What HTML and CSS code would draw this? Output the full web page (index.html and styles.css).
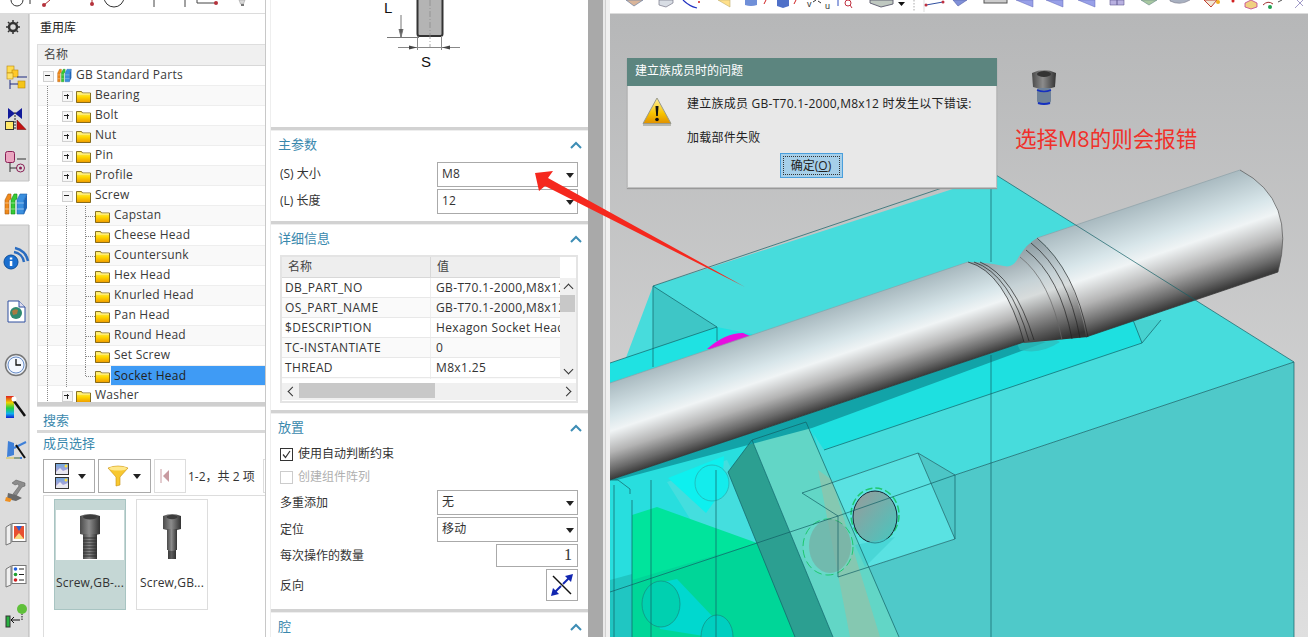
FILE: index.html
```html
<!DOCTYPE html>
<html lang="zh">
<head>
<meta charset="utf-8">
<title>重用库</title>
<link rel="stylesheet" href="styles.css">
</head>
<body>
<svg class="defs" width="0" height="0">
  <defs>
    <linearGradient id="fg" x1="0" y1="0" x2="0" y2="1"><stop offset="0" stop-color="#fff27a"/><stop offset=".5" stop-color="#ffd800"/><stop offset="1" stop-color="#ee9a00"/></linearGradient>
    <linearGradient id="bolt" x1="0" y1="0" x2="1" y2="0"><stop offset="0" stop-color="#4a4a4a"/><stop offset=".45" stop-color="#8c8c8c"/><stop offset="1" stop-color="#333"/></linearGradient>
    <symbol id="folder" viewBox="0 0 15 15"><path d="M.5 3.500h5l1 1.500h8v9.500H.5z" fill="url(#fg)" stroke="#6b5200" stroke-width=".8"/><path d="M1 6h13" stroke="#fff6a8"/></symbol>
    <symbol id="chev" viewBox="0 0 12 8"><path d="M1 7l5-5 5 5" fill="none" stroke="#3d8db5" stroke-width="2"/></symbol>
    <symbol id="books" viewBox="0 0 24 22"><path d="M1 7l3-6h3v5l-2 1v14H1z" fill="#f08a1c" stroke="#a85a10" stroke-width=".6"/><path d="M7 7l3-6h3v5l-2 1v14H7z" fill="#35c935" stroke="#158a15" stroke-width=".6"/><path d="M13 7l3-6h7l-3 6v14h-7z" fill="#3a8fdf" stroke="#1d5ea8" stroke-width=".6"/><path d="M20 7l3-6v14l-3 6z" fill="#1f66b8"/><path d="M1 10h4M1 16h4M7 10h4M7 16h4M13 10h7M13 16h7" stroke="#fff" stroke-opacity=".45"/></symbol>
    <symbol id="screw1" viewBox="0 0 30 50"><path d="M5 3q10-4 20 0v18q-10 3-20 0z" fill="url(#bolt)"/><ellipse cx="15" cy="4" rx="7" ry="2.500" fill="#3c3c3c"/><rect x="8" y="21" width="14" height="25" fill="url(#bolt)"/><path d="M8 25h14M8 28h14M8 31h14M8 34h14M8 37h14M8 40h14M8 43h14" stroke="#2e2e2e"/></symbol>
    <symbol id="screw2" viewBox="0 0 24 50"><path d="M3 3q9-4 18 0v13q-9 3-18 0z" fill="url(#bolt)"/><ellipse cx="12" cy="4" rx="5.500" ry="2.200" fill="#3c3c3c"/><rect x="7" y="16" width="10" height="21" fill="url(#bolt)"/><rect x="8" y="37" width="8" height="9" fill="url(#bolt)"/><path d="M8 39h8M8 41h8M8 43h8M8 45h8" stroke="#2e2e2e"/></symbol>
  </defs>
</svg>

<div class="app">
  <div class="left">
    <svg class="toolstrip-svg" width="265" height="13" viewBox="0 0 265 13">
      <path d="M11 0a6 6 0 0 0 12 0M30 0v4" fill="none" stroke="#333" stroke-width="1"/>
      <path d="M44 5l6-5M92 4V0" stroke="#a33" fill="none"/><circle cx="44" cy="5" r="2" fill="#b5323c"/><circle cx="92" cy="4" r="2" fill="#b5323c"/>
      <circle cx="114" cy="-3" r="10" fill="none" stroke="#333"/>
      <path d="M154 0v7M185 0v7M197 0v3h19" stroke="#444" fill="none"/><circle cx="216" cy="3" r="2" fill="#b5323c"/>
      <path d="M239 0h6l-1.500 4h-3z" fill="#d8d8d8" stroke="#999" stroke-width=".5"/><rect x="241" y="4" width="3" height="2" fill="#777"/>
    </svg>
    <div class="left-body">
      <svg class="rail" width="30" height="623" viewBox="0 14 30 623">
        <rect x="0" y="13" width="29" height="624" fill="#dcdcdc"/>
        <path d="M29 13v168M29 225v412" stroke="#b5b5b5"/>
        <rect x="0" y="181" width="30" height="44" fill="#fff"/>
        <path d="M0 181h29M0 225h29" stroke="#c4c4c4"/>
        <g fill="none" stroke="#333"><circle cx="13" cy="27" r="4" stroke-width="2.500"/><path d="M13 20v2M13 32v2M6 27h2M18 27h2M8 22l1.500 1.500M16.500 30.500L18 32M18 22l-1.500 1.500M9.500 30.500L8 32" stroke-width="1.500"/></g>
        <g stroke="#b8860b" stroke-width=".6"><rect x="7" y="66" width="7" height="7" fill="#ffdc50"/><rect x="12" y="70" width="6" height="7" fill="#ffc928"/><rect x="7" y="73" width="6" height="6" fill="#ffe36a"/><rect x="18" y="81" width="7" height="7" fill="#f5c518"/></g>
        <path d="M17 77h10M10 80v9M10 84h8" stroke="#1f2a80" fill="none"/>
        <path d="M8 108l7 5.500 7-5.500v11l-7-5.500-7 5.500z" fill="#111a9a"/><rect x="5.500" y="121.500" width="8" height="8" fill="#ffe868" stroke="#333"/><path d="M17 120l9 9.500h-9z" fill="#c41212" stroke="#600" stroke-width=".5"/><path d="M15 112v18" stroke="#222" stroke-dasharray="2 1"/>
        <rect x="5.500" y="151.500" width="9" height="11" rx="2" fill="#eaa5c0" stroke="#8a1f55"/><path d="M17 159h9M10 163v9M10 168h7" stroke="#333" fill="none"/><circle cx="20.500" cy="168" r="4" fill="none" stroke="#8a1f55"/><circle cx="20.500" cy="168" r="1.500" fill="#8a1f55"/>
        <use href="#books" x="4" y="193" width="24" height="22"/>
        <circle cx="11" cy="262" r="7" fill="#1a6fd0" stroke="#0c4f9c"/><rect x="9.800" y="261" width="2.500" height="5" fill="#fff"/><rect x="9.800" y="257.500" width="2.500" height="2" fill="#fff"/>
        <path d="M14 252a12 12 0 0 1 10 10M15 248a16 16 0 0 1 13 13" fill="none" stroke="#2a6cc0" stroke-width="2.500"/>
        <path d="M8 301h11l6 6v15H8z" fill="#fff" stroke="#2f4f9f"/><path d="M19 301v6h6" fill="#dde" stroke="#2f4f9f"/><circle cx="16" cy="313" r="6" fill="#2f8a70"/><path d="M12 311q3-3 6-1l-1 4-4 1z" fill="#a87a40"/>
        <circle cx="16" cy="365" r="10.500" fill="#e8eef8" stroke="#777" stroke-width="1.500"/><circle cx="16" cy="365" r="8" fill="#f4f8ff" stroke="#6a8fc8"/><path d="M16 359v6h5" fill="none" stroke="#111" stroke-width="1.300"/>
        <defs><linearGradient id="rb" x1="0" y1="0" x2="0" y2="1"><stop offset="0" stop-color="#e02020"/><stop offset=".3" stop-color="#f0d000"/><stop offset=".55" stop-color="#20d040"/><stop offset=".8" stop-color="#10b0f0"/><stop offset="1" stop-color="#1020d0"/></linearGradient></defs>
        <rect x="6" y="396" width="8" height="22" fill="url(#rb)"/><path d="M14 401l11 15" stroke="#111" stroke-width="2.500"/><circle cx="14" cy="399" r="2.500" fill="#fff"/>
        <path d="M8 441l6 2v12l-7 2z" fill="#3f80d8"/><path d="M14 448l12-6M14 458h8" stroke="#3f80d8" stroke-width="2"/><path d="M16 445l9 13" stroke="#111" stroke-width="2"/><path d="M6 458h14" stroke="#d8c040"/>
        <path d="M25 483l-9-3-4 3 3 2 3-1 1 2-6 8 3 2 6-9 3-1z" fill="#8c8c8c" stroke="#555" stroke-width=".5"/><path d="M8 493l8 2 6 3-6 3-9-2z" fill="#6a6a6a"/><path d="M6 497l6 2-2 3-5-1z" fill="#f09020"/>
        <path d="M6 527l5-3v19l-5 2z" fill="#f0f0f0" stroke="#777"/><rect x="12" y="523.500" width="14" height="18" fill="#fff" stroke="#777"/><rect x="14" y="526" width="10" height="13" fill="#e85030"/><path d="M16 526l3 5 3-5z" fill="#3060d0"/><path d="M14 539h10l-5-6z" fill="#f8d880"/>
        <path d="M6 569l5-3v19l-5 2z" fill="#f0f0f0" stroke="#777"/><rect x="12" y="565.500" width="14" height="18" fill="#fff" stroke="#777"/><circle cx="15.500" cy="569" r="1.800" fill="#2060e0"/><circle cx="15.500" cy="574.500" r="1.800" fill="#20a030"/><circle cx="15.500" cy="580" r="1.800" fill="#d02020"/><path d="M19 569h5M19 574.500h5M19 580h5" stroke="#222"/>
        <rect x="6" y="616" width="4" height="11" fill="#28b040" stroke="#333"/><path d="M20 620h-8M14 617l-3 3 3 3" fill="none" stroke="#111"/><path d="M22 620v-6" stroke="#111" stroke-dasharray="1.500 1"/><circle cx="22" cy="609" r="5" fill="#5fc03a"/>
      </svg>
      <div class="lib">
        <div class="lib-title">重用库</div>
        <div class="tree">
          <div class="tree-head">名称</div>
          <div class="tree-body">
            <div class="row"><span class="g exp minus"></span><svg class="ic" width="16" height="15"><use href="#books"/></svg><span class="t">GB Standard Parts</span></div>
            <div class="row"><span class="g line"></span><span class="g exp plus"></span><svg class="ic"><use href="#folder"/></svg><span class="t">Bearing</span></div>
            <div class="row"><span class="g line"></span><span class="g exp plus"></span><svg class="ic"><use href="#folder"/></svg><span class="t">Bolt</span></div>
            <div class="row"><span class="g line"></span><span class="g exp plus"></span><svg class="ic"><use href="#folder"/></svg><span class="t">Nut</span></div>
            <div class="row"><span class="g line"></span><span class="g exp plus"></span><svg class="ic"><use href="#folder"/></svg><span class="t">Pin</span></div>
            <div class="row"><span class="g line"></span><span class="g exp plus"></span><svg class="ic"><use href="#folder"/></svg><span class="t">Profile</span></div>
            <div class="row"><span class="g line"></span><span class="g exp minus"></span><svg class="ic"><use href="#folder"/></svg><span class="t">Screw</span></div>
            <div class="row"><span class="g line"></span><span class="g line"></span><span class="g conn"></span><svg class="ic"><use href="#folder"/></svg><span class="t">Capstan</span></div>
            <div class="row"><span class="g line"></span><span class="g line"></span><span class="g conn"></span><svg class="ic"><use href="#folder"/></svg><span class="t">Cheese Head</span></div>
            <div class="row"><span class="g line"></span><span class="g line"></span><span class="g conn"></span><svg class="ic"><use href="#folder"/></svg><span class="t">Countersunk</span></div>
            <div class="row"><span class="g line"></span><span class="g line"></span><span class="g conn"></span><svg class="ic"><use href="#folder"/></svg><span class="t">Hex Head</span></div>
            <div class="row"><span class="g line"></span><span class="g line"></span><span class="g conn"></span><svg class="ic"><use href="#folder"/></svg><span class="t">Knurled Head</span></div>
            <div class="row"><span class="g line"></span><span class="g line"></span><span class="g conn"></span><svg class="ic"><use href="#folder"/></svg><span class="t">Pan Head</span></div>
            <div class="row"><span class="g line"></span><span class="g line"></span><span class="g conn"></span><svg class="ic"><use href="#folder"/></svg><span class="t">Round Head</span></div>
            <div class="row"><span class="g line"></span><span class="g line"></span><span class="g conn"></span><svg class="ic"><use href="#folder"/></svg><span class="t">Set Screw</span></div>
            <div class="row"><span class="g line"></span><span class="g line"></span><span class="g conn last"></span><svg class="ic"><use href="#folder"/></svg><span class="t cur">Socket Head</span></div>
            <div class="row"><span class="g line"></span><span class="g exp plus"></span><svg class="ic"><use href="#folder"/></svg><span class="t">Washer</span></div>
          </div>
        </div>
        <div class="band"></div>
        <div class="lib-sec search">搜索</div>
        <div class="band thin"></div>
        <div class="lib-sec member">成员选择</div>
        <div class="gal-tools">
          <button class="tbtn">
            <svg width="14" height="26" viewBox="0 0 14 26"><defs><linearGradient id="pic" x1="0" y1="0" x2="0" y2="1"><stop offset="0" stop-color="#6fa8dc"/><stop offset="1" stop-color="#c8a0d8"/></linearGradient></defs><rect x=".5" y=".5" width="13" height="11" fill="url(#pic)" stroke="#333"/><path d="M1 9l4-4 3 3 5-2v5H1z" fill="#e8e8f0"/><rect x=".5" y="14.500" width="13" height="11" fill="url(#pic)" stroke="#333"/><path d="M1 23l4-4 3 3 5-2v5H1z" fill="#e8e8f0"/><circle cx="11" cy="3" r="1.500" fill="#ffe040"/><circle cx="11" cy="17" r="1.500" fill="#ffe040"/></svg>
            <span class="caret"></span>
          </button>
          <button class="tbtn">
            <svg width="22" height="22" viewBox="0 0 22 22"><path d="M1 3q10-4 20 0l-8 9v8l-4 1v-9z" fill="#f8c830" stroke="#c89010" stroke-width=".6"/><ellipse cx="11" cy="3.500" rx="9" ry="2" fill="#ffe88a"/></svg>
            <span class="caret"></span>
          </button>
          <div class="pager"><svg width="10" height="16" viewBox="0 0 10 16"><path d="M1 1v14" stroke="#c89aa0"/><path d="M9 2v12L3 8z" fill="#c89aa0"/></svg></div>
          <span class="count">1-2，共 2 项</span>
          <div class="pager stub"></div>
        </div>
        <div class="gallery">
          <div class="item on">
            <div class="thumb"><svg width="30" height="50"><use href="#screw1"/></svg></div>
            <div class="cap">Screw,GB-...</div>
          </div>
          <div class="item">
            <div class="thumb"><svg width="24" height="50"><use href="#screw2"/></svg></div>
            <div class="cap">Screw,GB...</div>
          </div>
        </div>
      </div>
    </div>
  </div>

  <div class="gutter"></div>

  <div class="form">
    <div class="preview">
      <svg width="316" height="72" viewBox="0 0 316 72">
        <rect x="146.500" y="-4" width="25" height="40" rx="2" fill="#b4b4b4" stroke="#333" stroke-width="2"/>
        <path d="M159 0v48" stroke="#888" stroke-dasharray="6 2 1 2" stroke-width=".7"/>
        <path d="M116 37.500h32M130 15v22M128 29l2 8 2-8" stroke="#777" fill="#444"/>
        <path d="M127 47.500h62M146.500 36v14M170.500 36v14" stroke="#888" fill="none"/>
        <path d="M146 47.500l-8-2v4zM171 47.500l8-2v4z" fill="#444"/>
        <text x="113" y="13" class="dim">L</text>
        <text x="150" y="67" class="dim">S</text>
      </svg>
    </div>

    <section class="sec main">
      <div class="sec-h"><span>主参数</span><svg width="12" height="8"><use href="#chev"/></svg></div>
      <div class="frow"><label>(S) 大小</label><div class="sel">M8</div></div>
      <div class="frow"><label>(L) 长度</label><div class="sel">12</div></div>
    </section>

    <section class="sec detail">
      <div class="sec-h"><span>详细信息</span><svg width="12" height="8"><use href="#chev"/></svg></div>
      <div class="grid">
        <div class="grid-main">
          <div class="grid-cols">
            <div class="ghead"><span class="c1">名称</span><span class="c2">值</span></div>
            <div class="grow"><span class="c1">DB_PART_NO</span><span class="c2">GB-T70.1-2000,M8x12</span></div>
            <div class="grow"><span class="c1">OS_PART_NAME</span><span class="c2">GB-T70.1-2000,M8x12</span></div>
            <div class="grow"><span class="c1">$DESCRIPTION</span><span class="c2">Hexagon Socket Head</span></div>
            <div class="grow"><span class="c1">TC-INSTANTIATE</span><span class="c2">0</span></div>
            <div class="grow"><span class="c1">THREAD</span><span class="c2">M8x1.25</span></div>
            <div class="grow stub"><span class="c1"></span><span class="c2"></span></div>
          </div>
          <div class="vbar"><i class="ar up"></i><b></b><i class="ar down"></i></div>
        </div>
        <div class="hbar"><i class="ar lf"></i><b></b><i class="ar rt"></i></div>
      </div>
    </section>

    <section class="sec place">
      <div class="sec-h"><span>放置</span><svg width="12" height="8"><use href="#chev"/></svg></div>
      <div class="chk"><span class="box"><svg width="11" height="11" viewBox="0 0 11 11"><path d="M2 5.500l2.500 3L9 2" fill="none" stroke="#333" stroke-width="1.200"/></svg></span>使用自动判断约束</div>
      <div class="chk off"><span class="box"></span>创建组件阵列</div>
      <div class="frow"><label>多重添加</label><div class="sel">无</div></div>
      <div class="frow"><label>定位</label><div class="sel">移动</div></div>
      <div class="frow num"><label>每次操作的数量</label><div class="inp">1</div></div>
      <div class="frow rev"><label>反向</label><div class="revb"><svg width="24" height="24" viewBox="0 0 24 24"><path d="M3 3l18 18" stroke="#111" stroke-width="1.500"/><path d="M13 11l6-6" stroke="#1226b0" stroke-width="2"/><path d="M23 1l-2 8-6-6z" fill="#1226b0"/><path d="M11 13l-6 6" stroke="#1226b0" stroke-width="2"/><path d="M1 23l2-8 6 6z" fill="#1226b0"/></svg></div></div>
    </section>

    <section class="sec cav">
      <div class="sec-h"><span>腔</span><svg width="12" height="8"><use href="#chev"/></svg></div>
    </section>
  </div>

  <div class="vscroll"></div>

  <div class="right">
    <svg class="toolstrip-svg" width="698" height="13" viewBox="610 0 698 13">
      <path d="M626 0l8 6 9-6z" fill="#d9b59a" stroke="#6a7fa0" stroke-width=".7"/>
      <path d="M659 0v5l7 2 7-4V0z" fill="#d8dde4" stroke="#778" stroke-width=".7"/>
      <path d="M683 0q6 6 14 8" fill="none" stroke="#2030c0" stroke-width="1.200"/><circle cx="699" cy="2" r="1" fill="#d02020"/>
      <path d="M718 0l12 7V0z" fill="#ffe08a" stroke="#c0b070" stroke-width=".6"/>
      <path d="M745 0v5q6 2 12 0V0z" fill="#6f8fd8"/><path d="M764 4l2-4" stroke="#d02020"/>
      <path d="M777 0v6l6 2 6-2V0z" fill="#4f70c8"/><path d="M794 4l2-4" stroke="#d02020"/>
      <text x="807" y="7" class="tiny">v</text><text x="825" y="9" class="tiny">u</text><path d="M813 2l3-2M818 1l3 2" stroke="#333"/>
      <path d="M838 0v6" stroke="#3050c0"/><circle cx="848" cy="3" r="3" fill="none" stroke="#c03040"/><path d="M850 5l2 3" stroke="#c03040"/>
      <path d="M870 0v3l11 4 12-3V0z" fill="#bfc8c0" stroke="#667"/>
      <path d="M898 2h7l-3.500 4z" fill="#111"/>
      <path d="M914 0v12" stroke="#aaa" stroke-dasharray="1.500 1.500"/><path d="M924 0v12" stroke="#ddd"/>
      <path d="M926 5l17-3" stroke="#3050a0"/><circle cx="926" cy="5" r="1.500" fill="#c03040"/><circle cx="943" cy="2" r="1.500" fill="#c03040"/>
      <path d="M953 0l5 6 9-6z" fill="#8090d8" stroke="#5060a8" stroke-width=".6"/>
      <rect x="984" y="-2" width="23" height="5" fill="#ccc" stroke="#555"/>
      <path d="M1016 0l17 7V0zM1046 0l17 7V0zM1078 0l17 7V0z" fill="#98a0e8" stroke="#6068b8" stroke-width=".5"/>
      <path d="M1110 0v5h14V0z" fill="#b8b0e0" stroke="#605890" stroke-width=".6"/><path d="M1117 0v5" stroke="#605890"/>
      <path d="M1141 0l8 5 8-5z" fill="#a8c8a0" stroke="#688" stroke-width=".6"/>
      <path d="M1170 1q10 5 20-1v-1h-20z" fill="#a8b0c0" stroke="#778" stroke-width=".6"/>
      <path d="M1204 0l7 7 6-7z" fill="#f0e8d8" stroke="#c04030"/><circle cx="1218" cy="2" r="2" fill="#f0b020"/>
      <circle cx="1233" cy="1" r="1.500" fill="#d02020"/><path d="M1245 3l6-3 6 3v4l-6 2-6-2z" fill="#f0d080" stroke="#c04090" stroke-width=".8"/>
      <path d="M1263 5q5-5 10-1" fill="none" stroke="#a03030"/><circle cx="1270" cy="7" r="2" fill="#20a050"/><path d="M1278 2l4-2" stroke="#555"/>
      <path d="M1295 8l8-8M1297 0l6 6" stroke="#a09ac8"/>
    </svg>
    <div class="view">
      <svg class="scene" width="698" height="623" viewBox="610 14 698 623">
        <defs>
          <linearGradient id="sh" gradientUnits="userSpaceOnUse" x1="700" y1="353" x2="729" y2="440"><stop offset="0" stop-color="#a9bac0"/><stop offset=".35" stop-color="#d8e6ea"/><stop offset=".5" stop-color="#f0f4f5"/><stop offset=".72" stop-color="#b4b4b4"/><stop offset=".9" stop-color="#6a6a6a"/><stop offset="1" stop-color="#3c3c3c"/></linearGradient>
          <linearGradient id="sh2" gradientUnits="userSpaceOnUse" x1="1100" y1="217" x2="1135" y2="319"><stop offset="0" stop-color="#a9bac0"/><stop offset=".35" stop-color="#d8e6ea"/><stop offset=".5" stop-color="#f0f4f5"/><stop offset=".72" stop-color="#b4b4b4"/><stop offset=".9" stop-color="#6a6a6a"/><stop offset="1" stop-color="#3c3c3c"/></linearGradient>
          <linearGradient id="sh3" gradientUnits="userSpaceOnUse" x1="1012" y1="250" x2="1042" y2="345"><stop offset="0" stop-color="#8f9ea4"/><stop offset=".35" stop-color="#c6d2d6"/><stop offset=".5" stop-color="#d8dcdc"/><stop offset=".72" stop-color="#8e8e8e"/><stop offset="1" stop-color="#333"/></linearGradient>
          <linearGradient id="hole" x1="0" y1="0" x2="1" y2="1"><stop offset="0" stop-color="#9a9a9a"/><stop offset="1" stop-color="#45c8c0"/></linearGradient>
        </defs>
        <path d="M653 286L996 175 1294 362 955 475 918 453 802 493 838 516 610 592V400z" fill="#47dcdc"/>
        <path d="M653 286l64 41v16l-64 24z" fill="#3ec6c6"/>
        <path d="M610 363l107-36 60 12-167 46z" fill="#1fe2e2"/>
        <path d="M1294 362V637H899L838 577 955 539V475z" fill="#4fc9c9"/>
        <path d="M802 493l116-40 37 86-117 38v-61z" fill="#5ae2e2"/>
        <path d="M918 453l37 22v64z" fill="#4cc6c6"/>
        <path d="M610 480l202-52 26 88-228 76z" fill="#28dede"/>
        <path d="M667 482l60-22 40 82-50 20z" fill="#44dede"/>
        <path d="M668 478l56-22-2 35-16 22z" fill="#0ef0ef"/>
        <path d="M610 592l228-76v61l61 60H610z" fill="#1fc8c4"/>
        <path d="M632 515l25-8 100 36 40 94H632z" fill="#00e49c"/>
        <path d="M632 580l125-37 40 94H632z" fill="#00d698"/>
        <path d="M872 620l17 17h-10z" fill="#00e49c"/>
        <path d="M650 585l10 44 50 8h22l-55-58z" fill="#00d8cf"/>
        <path d="M610 580l22-6v63h-22z" fill="#20c6c2"/>
        <path d="M728 472l24-32 81 197h-38z" fill="#2c9f91"/>
        <path d="M752 440l54-18 93 215h-66z" fill="#62d6c6"/>
        <path d="M818 470l14 10 48 157h-30z" fill="#d8a880" fill-opacity=".3"/>
        <path d="M806 422l218-74 110-38 8 33-318 107z" fill="#1ee0e0"/>
        <path d="M610 480l414-138 22 0-234 86-195 52z" fill="#12a3a8"/>
        <path d="M1133 320h28l-19 23z" fill="#47d2d0"/>
        <path d="M1020 350q20 5 40-8l-14-8-30 8z" fill="#2fb9b9" opacity=".7"/>
        <ellipse cx="875" cy="515" rx="24" ry="27" fill="#5de4e2" stroke="#1fc86f" stroke-width="1.500" stroke-dasharray="7 3"/>
        <ellipse cx="875" cy="517" rx="22" ry="26" fill="url(#hole)" stroke="#123" stroke-width="1"/>
        <path d="M855 545l40-8-30 30z" fill="#3ecfcf" opacity=".6"/>
        <ellipse cx="828" cy="547" rx="25" ry="28" fill="#6ddccc" fill-opacity=".5" stroke="#1fc86f" stroke-dasharray="8 4"/>
        <ellipse cx="830" cy="546" rx="21" ry="27" fill="#808c88" fill-opacity=".4"/>
        <ellipse cx="712" cy="483" rx="17" ry="18" fill="#14ecec" stroke="#2aa0a0" stroke-width=".6"/>
        <ellipse cx="661" cy="604" rx="19" ry="23" fill="#00d0b0" stroke="#158a80" stroke-width=".7"/>
        <ellipse cx="717" cy="637" rx="16" ry="22" fill="#00cfc0" stroke="#158a80" stroke-width=".7"/>
        <path d="M707 349q18-16 36-16l7 3-6 6q-18 8-37 7z" fill="#e60ee0"/>
        <path d="M968 262Q985 262 1004 266 1012 268 1017 260 1025 245 1037 238 1075 270 1088 337L1024 343z" fill="url(#sh3)"/>
        <path d="M610 383L968 262Q1005 272 1024 342L610 480z" fill="url(#sh)"/>
        <path d="M1037 238L1240 170Q1297 200 1278 272L1086 337Q1075 270 1037 238z" fill="url(#sh2)"/>
        <g fill="none" stroke="#222" stroke-width=".7">
          <path d="M968 262Q1005 272 1024 342"/><path d="M974 262Q1010 274 1029 341"/><path d="M980 262Q1014 276 1034 340"/>
          <path d="M1037 238Q1075 270 1088 337"/><path d="M1031 243Q1068 272 1080 338"/><path d="M1026 250Q1060 276 1072 339"/><path d="M1020 257Q1050 280 1062 340" stroke="#666"/>
          <path d="M1240 170Q1297 200 1278 272" stroke="#555"/>
          <path d="M1037 238L1240 170" stroke="#8ca0a8"/><path d="M610 383L968 262" stroke="#8ca0a8"/>
          <path d="M610 480L1024 342M1086 337L1278 272" stroke="#333"/>
        </g>
        <g fill="none" stroke="#126066" stroke-width=".7">
          <path d="M653 286L942 188M996 175l298 187V637M1294 362L955 475 918 453 802 493 838 516 955 475M955 475V539L838 577V516L610 592"/>
          <path d="M918 453l37 86"/>
          <path d="M653 286V367M653 286l64 41v14M610 363l107-36"/>
          <path d="M991 188V262M991 355V637"/>
          <path d="M614 485V637M632 500V637M651 480V637M716 470V637"/>
          <path d="M752 440l54-18 93 215M752 440l-24 32 67 165M752 440l81 197"/>
          <path d="M1142 343L824 450M1133 320l9 23 19-23"/>
          <path d="M610 480l8 0 12 9v5"/>
        </g>
      </svg>

      <svg class="mini" width="26" height="36" viewBox="0 0 26 36">
        <path d="M1 4q12-6 24 0l-1 14q-11 4-22 0z" fill="url(#bolt)"/><ellipse cx="13" cy="5" rx="7" ry="3" fill="#333"/>
        <rect x="6" y="19" width="14" height="15" rx="2" fill="#6f8298"/><path d="M6 21q7 3 14 0" stroke="#1530c0" stroke-width="1.500" fill="none"/><path d="M7 34q6 2 12 0" stroke="#1530c0" stroke-width="2" fill="none"/>
      </svg>
      <div class="note">选择M8的则会报错</div>

      <div class="dlg">
        <div class="dlg-t">建立族成员时的问题</div>
        <div class="dlg-b">
          <svg class="warn" width="30" height="30" viewBox="0 0 30 30"><defs><linearGradient id="wg" x1="0" y1="0" x2="0" y2="1"><stop offset="0" stop-color="#fff0a0"/><stop offset=".6" stop-color="#f8c400"/><stop offset="1" stop-color="#e09000"/></linearGradient></defs><path d="M15 1L29 26.500H1z" fill="url(#wg)" stroke="#9a9a8a"/><path d="M1 27h28v2H1z" fill="#b8b8b0"/><path d="M13.500 9h3l-.7 10h-1.600z" fill="#111"/><circle cx="15" cy="22.500" r="1.800" fill="#111"/></svg>
          <div class="dlg-m">
            <div class="l1">建立族成员 GB-T70.1-2000,M8x12 时发生以下错误:</div>
            <div class="l2">加载部件失败</div>
          </div>
        </div>
        <div class="dlg-f"><button class="ok"><span>确定(<u>O</u>)</span></button></div>
      </div>
    </div>
  </div>

  <svg class="arrow" width="230" height="130" viewBox="530 165 230 130">
    <path d="M535 173l18-2-5 7 197 109-200-101-6 5z" fill="#f5281e"/>
  </svg>
</div>
</body>
</html>
```

FILE: styles.css
```css
* { box-sizing: border-box; }
html, body { margin: 0; padding: 0; height: 100%; overflow: hidden; background: #fff; }
body, button { font: 12px/1.2 "Open Sans", "Noto Sans CJK SC", sans-serif; color: #333; }
.defs { position: absolute; }
.app { position: relative; display: flex; width: 1308px; height: 637px; overflow: hidden; background: #fff; }
svg { display: block; }

.left { width: 266px; flex: none; display: flex; flex-direction: column; border-right: 1px solid #c8c8c8; }
.toolstrip-svg { flex: none; }
.left-body { flex: 1; display: flex; border-top: 1px solid #dcdcdc; min-height: 0; }
.rail { flex: none; }
.lib { flex: 1; min-width: 0; display: flex; flex-direction: column; }
.lib-title { height: 30px; padding: 7px 0 0 10px; font-size: 12px; color: #222; flex: none; }
.tree { height: 358px; margin-left: 7px; overflow: hidden; border-left: 1px solid #dedede; border-top: 1px solid #dedede; flex: none; }
.tree-head { height: 21px; padding: 3px 0 0 6px; background: #f0f0f0; border-bottom: 1px solid #d8d8d8; color: #444; }
.row { display: flex; align-items: center; height: 20px; border-bottom: 1px solid #eeeeee; }
.row:nth-child(even) { background: #f9f9f9; }
.g { position: relative; width: 19px; height: 20px; flex: none; }
.line::before, .conn::before { content: ""; position: absolute; left: 9px; top: 0; bottom: -1px; border-left: 1px dotted #888; }
.conn::after { content: ""; position: absolute; left: 10px; top: 10px; width: 9px; border-top: 1px dotted #888; }
.conn.last::before { bottom: 10px; }
.exp::before { content: ""; position: absolute; left: 5px; top: 5px; width: 9px; height: 9px; border: 1px solid #d0d0d0; background: #f6f6f6; }
.plus::before { background: linear-gradient(#222, #222) center / 1px 5px no-repeat, #f6f6f6; }
.exp::after { content: ""; position: absolute; left: 7px; top: 9px; width: 5px; height: 1px; background: #222; }
.ic { width: 15px; height: 15px; flex: none; margin-right: 4px; position: relative; z-index: 1; }
.t { display: block; font-size: 12px; letter-spacing: .25px; color: #3a3a3a; padding: 0 0 1px; }
.t.cur { flex: 1; margin-left: -3px; padding: 2px 0 2px 3px; background: #3f9bf5; color: #222; line-height: 15px; }
.band { height: 5px; flex: none; background: #cfcfcf; margin-left: 7px; border-bottom: 1px solid #e0e0e0; }
.band.thin { height: 3px; margin-left: 7px; background: #d8d8d8; border: 0; }
.lib-sec { color: #3a88ad; font-size: 13px; padding-left: 13px; flex: none; }
.search { height: 23px; padding-top: 6px; }
.member { height: 26px; padding-top: 3px; }
.gal-tools { display: flex; align-items: stretch; gap: 3px; height: 34px; padding-left: 13px; flex: none; white-space: nowrap; overflow: hidden; }
.tbtn { width: 52px; flex: none; margin: 0; padding: 0 8px 0 11px; background: #fff; border: 1px solid #aaa; display: flex; align-items: center; justify-content: space-between; }
.tbtn + .tbtn { width: 53px; padding: 0 9px 0 8px; }
.caret { width: 0; height: 0; border: 4px solid transparent; border-top: 5px solid #222; border-bottom: 0; }
.pager { width: 32px; flex: none; border: 1px solid #ddd; display: flex; align-items: center; padding-left: 5px; }
.pager.stub { width: 20px; }
.count { align-self: center; margin: 2px 0 0 -1px; width: 72px; flex: none; color: #333; }
.gallery { flex: 1; margin: 2px 0 0 13px; border-left: 1px solid #ddd; border-top: 1px solid #ddd; display: flex; gap: 10px; padding: 3px 0 0 10px; overflow: hidden; }
.item { width: 72px; height: 111px; border: 1px solid #ddd; padding: 10px 1px 0; flex: none; }
.item.on { background: #c5d7d5; border-color: #a8c4c2; }
.thumb { height: 50px; background: #fff; display: flex; justify-content: center; padding-top: 3px; }
.cap { margin-top: 16px; white-space: nowrap; text-align: center; font-size: 12px; color: #333; letter-spacing: .15px; }

.gutter { width: 4px; flex: none; }
.form { width: 318px; flex: none; display: flex; flex-direction: column; background: #fff; border-left: 1px solid #eee; }
.preview { height: 127px; flex: none; }
.dim { font: 15px "Liberation Sans", sans-serif; fill: #111; }
.sec { flex: none; border-top: 3px solid #d2d2d2; padding: 0 10px 0 7px; background: #fff; box-shadow: inset 0 1px 0 #eee; }
.sec-h { display: flex; justify-content: space-between; align-items: center; height: 29px; padding-top: 1px; color: #3a88ad; font-size: 13px; }
.sec-h svg { margin-right: -4px; }
.main { height: 94px; }
.main .sec-h { margin-bottom: 3px; }
.detail { height: 189px; margin-top: 0; }
.place { height: 199px; }
.cav { flex: 1; }
.frow { display: flex; align-items: center; justify-content: space-between; color: #333; padding-left: 2px; margin-bottom: 2px; }
.frow label { font-size: 12px; }
.place .frow label { padding-top: 2px; }
.sel { position: relative; width: 141px; height: 25px; border: 1px solid #aaa; padding: 4px 0 0 4px; background: #fff; font-size: 12px; letter-spacing: .2px; }
.sel::after { content: ""; position: absolute; right: 3px; top: 10px; border: 4px solid transparent; border-top: 5px solid #222; border-bottom: 0; }

.grid { height: 148px; margin: 2px 0 0 2px; width: 298px; border: 2px solid #e4e4e4; }
.grid-main { display: flex; height: 122px; overflow: hidden; }
.grid-cols { width: 278px; flex: none; overflow: hidden; }
.ghead { display: flex; height: 21px; background: #eeeeee; border-bottom: 1px solid #d8d8d8; color: #444; }
.ghead .c1 { padding: 3px 0 0 6px; border-right: 1px solid #d8d8d8; }
.ghead .c2 { padding: 3px 0 0 6px; }
.c1 { display: block; width: 149px; flex: none; padding: 3px 0 0 3px; white-space: nowrap; }
.c2 { display: block; width: 129px; flex: none; padding: 3px 0 0 5px; white-space: nowrap; overflow: hidden; }
.grow { display: flex; height: 20px; border-bottom: 1px solid #e8e8e8; letter-spacing: .35px; }
.grow:nth-child(odd) { background: #fafafa; }
.grow .c1 { border-right: 1px solid #eee; }
.vbar { width: 16px; position: relative; background: #f0f0f0; margin-top: 21px; display: flex; flex-direction: column; justify-content: space-between; height: 101px; }
.vbar b { position: absolute; left: 0; top: 17px; width: 15px; height: 17px; background: #c8c8c8; }
.hbar { position: relative; display: flex; justify-content: space-between; height: 17px; background: #f0f0f0; margin-top: 4px; }
.hbar b { position: absolute; left: 17px; top: 0; width: 136px; height: 15px; background: #c8c8c8; }
.ar { display: block; width: 16px; height: 16px; position: relative; }
.ar::after { content: ""; position: absolute; left: 5px; top: 5px; width: 6px; height: 6px; border: solid #333; border-width: 1.500px 0 0 1.500px; }
.up::after { transform: rotate(45deg); top: 7px; }
.down::after { transform: rotate(225deg); top: 3px; }
.lf::after { transform: rotate(-45deg); left: 7px; }
.rt::after { transform: rotate(135deg); left: 3px; }

.chk { display: flex; align-items: center; gap: 5px; height: 23px; padding: 2px 0 0 2px; color: #333; }
.chk .box { width: 13px; height: 13px; border: 1px solid #333; flex: none; }
.chk.off { color: #b0b0b0; margin-bottom: 2px; }
.chk.off .box { border-color: #ccc; }
.num { height: 23px; margin-bottom: 2px; }
.inp { width: 82px; height: 23px; border: 1px solid #aaa; text-align: right; padding: 1px 5px 0 0; font: 16px "Liberation Serif", serif; }
.rev { height: 32px; }
.revb { width: 32px; height: 32px; border: 1px solid #aaa; padding: 3px; }

.vscroll { width: 22px; flex: none; background: linear-gradient(90deg, #a9a9a9 15px, #e9e9e9 15px, #e9e9e9 17px, #d0d0d0 17px, #d0d0d0 18px, #f0f0f0 18px); }
.right { flex: 1; min-width: 0; display: flex; flex-direction: column; }
.view { position: relative; flex: 1; background: linear-gradient(#b6b7b8, #dfdfdf); border-top: 1px solid #dcdcdc; }
.scene { position: absolute; left: 0; top: 0; }
.mini { position: absolute; left: 421px; top: 55px; }
.note { position: absolute; left: 405px; top: 112px; color: #f0302a; font-size: 21.500px; white-space: nowrap; }
.tiny { font: 9px "Liberation Sans", sans-serif; fill: #333; }

.dlg { position: absolute; left: 17px; top: 44px; width: 370px; height: 130px; background: #e8e8e8; border: 1px solid #c0c0c0; border-top: 0; box-shadow: 0 1px 1px #999; display: flex; flex-direction: column; }
.dlg-t { height: 28px; margin: 0 -1px; padding: 6px 0 0 8px; background: #5c857f; color: #fff; font-size: 12px; flex: none; }
.dlg-b { display: flex; flex: 1; padding: 11px 0 0 14px; }
.warn { flex: none; margin-right: 15px; }
.dlg-m { font-size: 12px; color: #222; letter-spacing: .25px; }
.l1 { height: 34px; padding-top: 0; }
.dlg-f { display: flex; justify-content: center; flex: none; padding: 0 2px 9px 0; }
.ok { width: 63px; height: 25px; padding: 2px; margin-left: 0; background: #a6cfe9; border: 1px solid #4a9fdc; font-size: 12px; color: #222; }
.ok span { display: block; height: 100%; border: 1px dotted #333; line-height: 17px; }
.arrow { position: absolute; left: 530px; top: 165px; }
```
